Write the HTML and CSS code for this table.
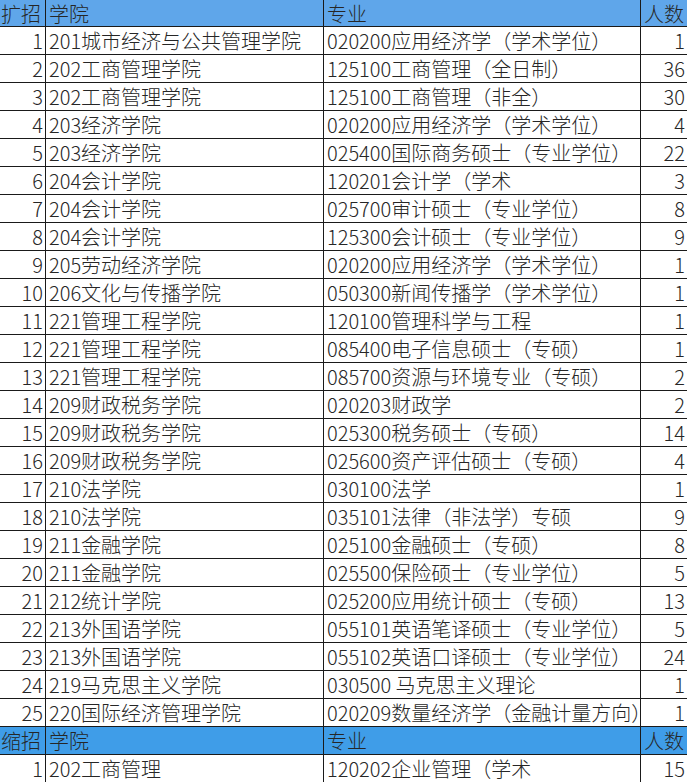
FILE: index.html
```html
<!DOCTYPE html>
<html lang="zh-CN">
<head>
<meta charset="utf-8">
<title>扩招缩招</title>
<link rel="stylesheet" href="styles.css">
</head>
<body>
<div class="sheet">
  <div class="row head head-top"><div class="c c1">扩招</div><div class="c c2">学院</div><div class="c c3">专业</div><div class="c c4">人数</div></div>
  <div class="row"><div class="c c1 num">1</div><div class="c c2">201城市经济与公共管理学院</div><div class="c c3">020200应用经济学（学术学位）</div><div class="c c4 num">1</div></div>
  <div class="row"><div class="c c1 num">2</div><div class="c c2">202工商管理学院</div><div class="c c3">125100工商管理（全日制）</div><div class="c c4 num">36</div></div>
  <div class="row"><div class="c c1 num">3</div><div class="c c2">202工商管理学院</div><div class="c c3">125100工商管理（非全）</div><div class="c c4 num">30</div></div>
  <div class="row"><div class="c c1 num">4</div><div class="c c2">203经济学院</div><div class="c c3">020200应用经济学（学术学位）</div><div class="c c4 num">4</div></div>
  <div class="row"><div class="c c1 num">5</div><div class="c c2">203经济学院</div><div class="c c3">025400国际商务硕士（专业学位）</div><div class="c c4 num">22</div></div>
  <div class="row"><div class="c c1 num">6</div><div class="c c2">204会计学院</div><div class="c c3">120201会计学（学术</div><div class="c c4 num">3</div></div>
  <div class="row"><div class="c c1 num">7</div><div class="c c2">204会计学院</div><div class="c c3">025700审计硕士（专业学位）</div><div class="c c4 num">8</div></div>
  <div class="row"><div class="c c1 num">8</div><div class="c c2">204会计学院</div><div class="c c3">125300会计硕士（专业学位）</div><div class="c c4 num">9</div></div>
  <div class="row"><div class="c c1 num">9</div><div class="c c2">205劳动经济学院</div><div class="c c3">020200应用经济学（学术学位）</div><div class="c c4 num">1</div></div>
  <div class="row"><div class="c c1 num">10</div><div class="c c2">206文化与传播学院</div><div class="c c3">050300新闻传播学（学术学位）</div><div class="c c4 num">1</div></div>
  <div class="row"><div class="c c1 num">11</div><div class="c c2">221管理工程学院</div><div class="c c3">120100管理科学与工程</div><div class="c c4 num">1</div></div>
  <div class="row"><div class="c c1 num">12</div><div class="c c2">221管理工程学院</div><div class="c c3">085400电子信息硕士（专硕）</div><div class="c c4 num">1</div></div>
  <div class="row"><div class="c c1 num">13</div><div class="c c2">221管理工程学院</div><div class="c c3">085700资源与环境专业（专硕）</div><div class="c c4 num">2</div></div>
  <div class="row"><div class="c c1 num">14</div><div class="c c2">209财政税务学院</div><div class="c c3">020203财政学</div><div class="c c4 num">2</div></div>
  <div class="row"><div class="c c1 num">15</div><div class="c c2">209财政税务学院</div><div class="c c3">025300税务硕士（专硕）</div><div class="c c4 num">14</div></div>
  <div class="row"><div class="c c1 num">16</div><div class="c c2">209财政税务学院</div><div class="c c3">025600资产评估硕士（专硕）</div><div class="c c4 num">4</div></div>
  <div class="row"><div class="c c1 num">17</div><div class="c c2">210法学院</div><div class="c c3">030100法学</div><div class="c c4 num">1</div></div>
  <div class="row"><div class="c c1 num">18</div><div class="c c2">210法学院</div><div class="c c3">035101法律（非法学）专硕</div><div class="c c4 num">9</div></div>
  <div class="row"><div class="c c1 num">19</div><div class="c c2">211金融学院</div><div class="c c3">025100金融硕士（专硕）</div><div class="c c4 num">8</div></div>
  <div class="row"><div class="c c1 num">20</div><div class="c c2">211金融学院</div><div class="c c3">025500保险硕士（专业学位）</div><div class="c c4 num">5</div></div>
  <div class="row"><div class="c c1 num">21</div><div class="c c2">212统计学院</div><div class="c c3">025200应用统计硕士（专硕）</div><div class="c c4 num">13</div></div>
  <div class="row"><div class="c c1 num">22</div><div class="c c2">213外国语学院</div><div class="c c3">055101英语笔译硕士（专业学位）</div><div class="c c4 num">5</div></div>
  <div class="row"><div class="c c1 num">23</div><div class="c c2">213外国语学院</div><div class="c c3">055102英语口译硕士（专业学位）</div><div class="c c4 num">24</div></div>
  <div class="row"><div class="c c1 num">24</div><div class="c c2">219马克思主义学院</div><div class="c c3">030500 马克思主义理论</div><div class="c c4 num">1</div></div>
  <div class="row"><div class="c c1 num">25</div><div class="c c2">220国际经济管理学院</div><div class="c c3">020209数量经济学（金融计量方向）</div><div class="c c4 num">1</div></div>
  <div class="row head head-mid"><div class="c c1">缩招</div><div class="c c2">学院</div><div class="c c3">专业</div><div class="c c4">人数</div></div>
  <div class="row"><div class="c c1 num">1</div><div class="c c2">202工商管理</div><div class="c c3">120202企业管理（学术</div><div class="c c4 num">15</div></div>
</div>
</body>
</html>
```

FILE: styles.css
```css
html, body {
  margin: 0;
  padding: 0;
  background: #ffffff;
}
body {
  font-family: "Noto Sans CJK SC", "Noto Sans", sans-serif;
  font-size: 20px;
  font-weight: 300;
  color: #262626;
  overflow: hidden;
}
.sheet {
  display: flex;
  flex-direction: column;
  width: 687px;
}
.row {
  display: grid;
  grid-template-columns: 46px 278px 317px 1fr;
  height: 28px;
}
.head-top {
  height: 27px;
  background: #5fa6ea;
}
.head-mid {
  background: #3f9de8;
}
.c {
  box-sizing: border-box;
  border-right: 1px solid #1a1a1a;
  border-bottom: 1px solid #1a1a1a;
  padding: 1px 3px 0 3px;
  line-height: 26px;
  white-space: nowrap;
  overflow: hidden;
}
.c4 {
  border-right: none;
}
.num {
  text-align: right;
  padding: 1px 2px 0 0;
}
.head .c1 {
  padding: 1px 0 0 1px;
}
```
